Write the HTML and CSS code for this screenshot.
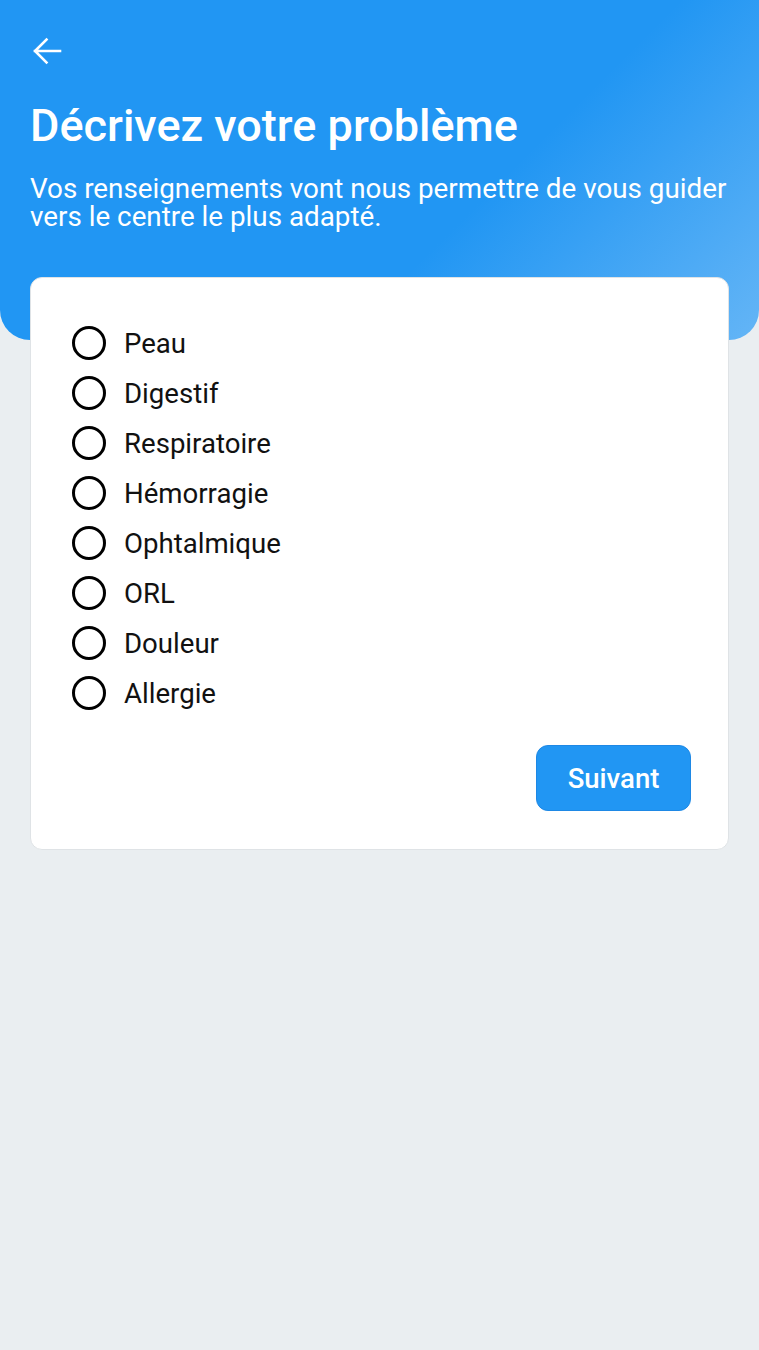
FILE: index.html
```html
<!DOCTYPE html>
<html lang="fr">

<head>
    <meta charset="UTF-8">
    <meta name="viewport" content="width=device-width, initial-scale=1.0">
    <title>Décrivez votre problème</title>
    <link rel="stylesheet" href="styles.css">
</head>

<body>
    <div class="header">
        <button class="back-btn" aria-label="Retour">
            <svg width="36" height="36" viewBox="0 0 36 36">
                <path d="M31 17H6M17.5 5.5L6 17l11.5 11.5" fill="none" stroke="#fff" stroke-width="2.6" stroke-linecap="square" />
            </svg>
        </button>
        <h1>Décrivez votre problème</h1>
        <p class="subtitle">Vos renseignements vont nous permettre de vous guider vers le centre le plus adapté.</p>
    </div>

    <div class="card">
        <form class="options">
            <label class="option"><input type="radio" name="probleme" value="peau"><span class="circle"></span>Peau</label>
            <label class="option"><input type="radio" name="probleme" value="digestif"><span class="circle"></span>Digestif</label>
            <label class="option"><input type="radio" name="probleme" value="respiratoire"><span class="circle"></span>Respiratoire</label>
            <label class="option"><input type="radio" name="probleme" value="hemorragie"><span class="circle"></span>Hémorragie</label>
            <label class="option"><input type="radio" name="probleme" value="ophtalmique"><span class="circle"></span>Ophtalmique</label>
            <label class="option"><input type="radio" name="probleme" value="orl"><span class="circle"></span>ORL</label>
            <label class="option"><input type="radio" name="probleme" value="douleur"><span class="circle"></span>Douleur</label>
            <label class="option"><input type="radio" name="probleme" value="allergie"><span class="circle"></span>Allergie</label>
        </form>
        <div class="actions">
            <button class="next-btn">Suivant</button>
        </div>
    </div>
</body>

</html>
```

FILE: styles.css
```css
body {
    font-family: Roboto, 'Noto Sans', sans-serif;
    background-color: #eaeef1;
    margin: 0;
    padding: 0;
}

.header {
    height: 340px;
    box-sizing: border-box;
    padding: 34px 30px 0 30px;
    background: linear-gradient(135deg, #2196f3 0%, #2196f3 62%, #64b5f6 100%);
    border-radius: 0 0 30px 30px;
    color: #ffffff;
}

.back-btn {
    display: block;
    background: none;
    border: none;
    padding: 0;
    margin: 0 0 0 -1px;
    width: 36px;
    height: 36px;
    cursor: pointer;
}

.header h1 {
    font-size: 45px;
    font-weight: 500;
    margin: 28px 0 0 0;
    line-height: 56px;
}

.subtitle {
    font-size: 27.8px;
    line-height: 28px;
    margin: 21px 0 0 0;
}

.card {
    background-color: #ffffff;
    border: 1px solid #dfe3e6;
    border-radius: 12px;
    margin: -63px 30px 0 30px;
    padding: 40px 37px 38px 41px;
    position: relative;
}

.options {
    display: flex;
    flex-direction: column;
}

.option {
    display: flex;
    align-items: center;
    height: 50px;
    font-size: 27.6px;
    color: #111111;
    cursor: pointer;
}

.option input {
    display: none;
}

.circle {
    width: 28px;
    height: 28px;
    border: 3px solid #000000;
    border-radius: 50%;
    margin-right: 18px;
    flex-shrink: 0;
}

.actions {
    display: flex;
    justify-content: flex-end;
    margin-top: 27px;
}

.next-btn {
    font-family: Roboto, sans-serif;
    font-size: 27.5px;
    font-weight: 500;
    color: #ffffff;
    background-color: #2196f3;
    border: 1px solid #1e88e5;
    border-radius: 12px;
    width: 155px;
    height: 66px;
    cursor: pointer;
}
```
